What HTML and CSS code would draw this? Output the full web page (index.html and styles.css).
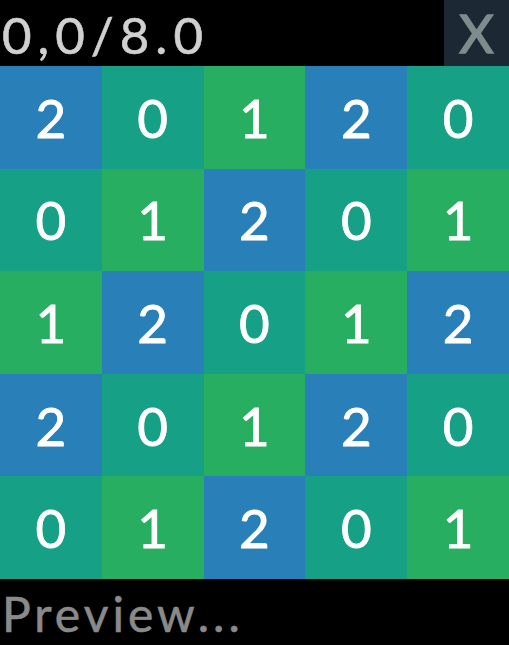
FILE: index.html
```html
<!DOCTYPE html>
<html>
<head>
<meta charset="utf-8">
<link rel="stylesheet" href="styles.css">
</head>
<body>
<div class="app">
  <header class="top">
    <div class="score">0,0/8.0</div>
    <button class="close">X</button>
  </header>
  <main class="board">
    <div class="cell c2">2</div><div class="cell c0">0</div><div class="cell c1">1</div><div class="cell c2">2</div><div class="cell c0">0</div>
    <div class="cell c0">0</div><div class="cell c1">1</div><div class="cell c2">2</div><div class="cell c0">0</div><div class="cell c1">1</div>
    <div class="cell c1">1</div><div class="cell c2">2</div><div class="cell c0">0</div><div class="cell c1">1</div><div class="cell c2">2</div>
    <div class="cell c2">2</div><div class="cell c0">0</div><div class="cell c1">1</div><div class="cell c2">2</div><div class="cell c0">0</div>
    <div class="cell c0">0</div><div class="cell c1">1</div><div class="cell c2">2</div><div class="cell c0">0</div><div class="cell c1">1</div>
  </main>
  <footer class="bottom">Preview...</footer>
</div>
</body>
</html>
```
FILE: styles.css
```css
html, body {
  margin: 0;
  padding: 0;
  background: #000;
}
.app {
  width: 509px;
  height: 645px;
  display: flex;
  flex-direction: column;
  font-family: Lato, "Noto Sans", sans-serif;
}
.top {
  height: 66px;
  display: flex;
  justify-content: space-between;
  align-items: stretch;
}
.score {
  color: #d0d0d0;
  font-size: 51px;
  line-height: 70px;
  letter-spacing: 6px;
  padding-left: 2px;
  -webkit-text-stroke: 0.6px #d0d0d0;
}
.close {
  width: 65px;
  border: none;
  margin: 0;
  padding: 0;
  background: #1c2833;
  color: #7f8c8d;
  font-family: inherit;
  font-size: 53px;
  line-height: 66px;
  -webkit-text-stroke: 1.5px #7f8c8d;
}
.board {
  height: 513px;
  display: grid;
  grid-template-columns: repeat(5, 1fr);
  grid-template-rows: repeat(5, 1fr);
}
.cell {
  display: flex;
  align-items: center;
  justify-content: center;
  color: #fff;
  font-size: 53px;
  -webkit-text-stroke: 0.8px #fff;
}
.c0 { background: #16a085; }
.c1 { background: #27ae60; }
.c2 { background: #2980b9; }
.bottom {
  height: 66px;
  color: #8a8a8a;
  font-size: 48px;
  line-height: 70px;
  letter-spacing: 4px;
  padding-left: 2px;
  -webkit-text-stroke: 0.6px #8a8a8a;
}
```
